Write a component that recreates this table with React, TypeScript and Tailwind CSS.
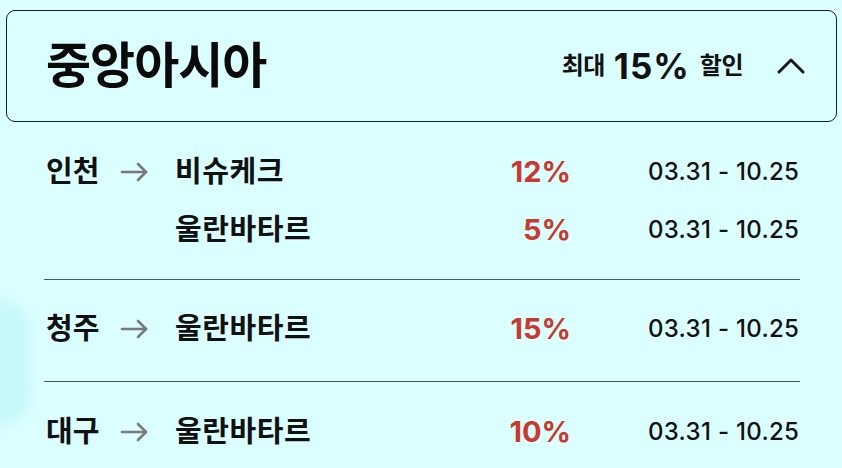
import React from "react";

const font = { fontFamily: '"Inter", "Noto Sans CJK KR", sans-serif' };

function Arrow() {
  return (
    <svg width="29" height="20" viewBox="0 0 29 20" fill="none" stroke="#7a7a7a" strokeWidth="2.6" strokeLinecap="round" strokeLinejoin="round">
      <path d="M2 10 H26" />
      <path d="M18 2 L26 10 L18 18" />
    </svg>
  );
}

type Line = { origin?: string; dest: string; pct: string };

function Row({ origin, dest, pct }: Line) {
  return (
    <div className="flex h-[34px] items-center">
      <div className="w-[76px] pl-[2px] text-[29px] font-bold tracking-[0px] text-[#111]">{origin ?? ""}</div>
      <div className="flex w-[55px] items-center">{origin ? <Arrow /> : null}</div>
      <div className="w-[200px] text-[29px] font-bold tracking-[0.6px] text-[#111]">{dest}</div>
      <div className="w-[196px] text-right text-[29px] font-bold text-[#c63a30]">{pct}</div>
      <div className="pl-[77px] text-[24px] font-medium tracking-[0.3px] text-[#111] whitespace-nowrap">03.31 - 10.25</div>
    </div>
  );
}

export default function App() {
  return (
    <div className="relative h-[468px] w-[842px] overflow-hidden bg-[#dbfefe]" style={font}>
      <div className="absolute left-[-40px] top-[300px] h-[125px] w-[70px] rounded-[30px] bg-[#c2f6fa] opacity-70 blur-[5px]" />
      <div className="relative pl-[6px] pr-[5px] pt-[10px]">
        <div className="flex h-[112px] items-center rounded-[9px] border border-[#1c1c1c] pl-[39px] pr-[30px]">
          <div className="text-[49px] font-bold tracking-[-1px] text-[#0a0a0a]">중앙아시아</div>
          <div className="ml-auto flex items-center text-[#111]">
            <span className="text-[24px] font-bold tracking-[-0.5px]">최대</span>
            <span className="ml-[9px] text-[35px] font-bold tracking-[1px]">15%</span>
            <span className="ml-[10px] text-[24px] font-bold tracking-[-0.5px]">할인</span>
            <svg className="ml-[33px]" width="30" height="20" viewBox="0 0 30 20" fill="none" stroke="#1a1a1a" strokeWidth="3" strokeLinecap="round" strokeLinejoin="round">
              <path d="M3 16 L15 4 L27 16" />
            </svg>
          </div>
        </div>
      </div>
      <div className="relative pl-[44px] pr-[42px]">
        <div className="flex flex-col gap-[24px] pb-[32px] pt-[33px]">
          <Row origin="인천" dest="비슈케크" pct="12%" />
          <Row dest="울란바타르" pct="5%" />
        </div>
        <div className="h-px bg-[#555]" />
        <div className="pb-[35px] pt-[32px]">
          <Row origin="청주" dest="울란바타르" pct="15%" />
        </div>
        <div className="h-px bg-[#555]" />
        <div className="pt-[33px]">
          <Row origin="대구" dest="울란바타르" pct="10%" />
        </div>
      </div>
    </div>
  );
}
